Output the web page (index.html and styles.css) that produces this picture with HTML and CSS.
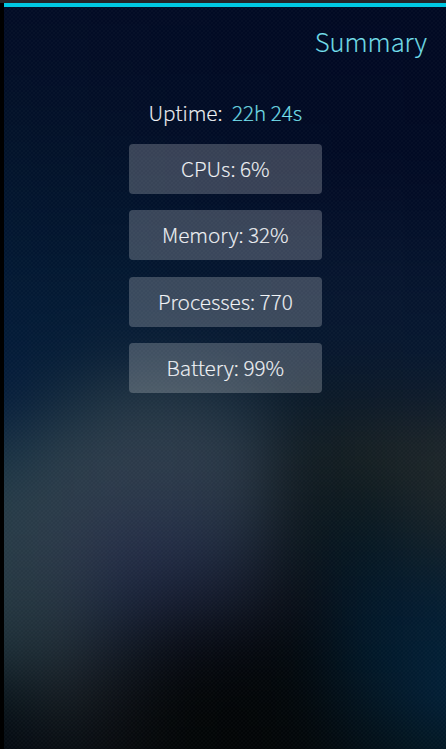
FILE: index.html
```html
<!DOCTYPE html>
<html lang="en">
<head>
<meta charset="utf-8">
<title>Summary</title>
<link rel="stylesheet" href="styles.css">
</head>
<body>
<main class="panel">
  <div class="backdrop" aria-hidden="true">
    <div class="glow">
      <i class="b0"></i><i class="b1"></i><i class="b2"></i><i class="b3"></i>
      <i class="b4"></i><i class="b5"></i><i class="b6"></i><i class="b7"></i>
      <i class="b8"></i><i class="b9"></i><i class="b10"></i><i class="b11"></i>
      <i class="b12"></i><i class="b13"></i><i class="b14"></i><i class="b15"></i>
    </div>
  </div>
  <h1 class="title">Summary</h1>
  <section class="content">
    <p class="uptime"><span>Uptime:</span><span class="value">22h 24s</span></p>
    <div class="stats">
      <div class="stat">CPUs: 6%</div>
      <div class="stat">Memory: 32%</div>
      <div class="stat">Processes: 770</div>
      <div class="stat">Battery: 99%</div>
    </div>
  </section>
</main>
</body>
</html>
```
FILE: styles.css
```css
* { box-sizing: border-box; margin: 0; }
html, body { height: 100%; overflow: hidden; }
body {
  background: #000;
  border-top: 3px solid #242427;
  padding-left: 4px;
  font-family: "Source Sans 3", "Noto Sans CJK SC", sans-serif;
  font-weight: 300;
  color: #f2f4f7;
  -webkit-text-stroke: 0.2px currentColor;
}
.panel {
  position: relative;
  height: 746px;
  border-top: 4px solid #00c8e2;
  overflow: hidden;
}

/* Soft wallpaper: horizontal colour bands blended into each other */
.backdrop { position: absolute; inset: 0; z-index: -1; overflow: hidden; }
.backdrop::after {
  content: "";
  position: absolute;
  inset: 0;
  background:
    radial-gradient(circle, rgba(255,255,255,.018) 0.7px, transparent 1.2px) 0 0 / 4px 4px,
    radial-gradient(circle, rgba(255,255,255,.018) 0.7px, transparent 1.2px) 2px 2px / 4px 4px;
}
.glow {
  position: absolute;
  left: -60px;
  right: -60px;
  top: -82px;
  display: flex;
  flex-direction: column;
  filter: blur(24px);
}
.glow i {
  height: 50px;
  background: linear-gradient(to right,
    var(--a) 60px, var(--b) 116px, var(--c) 176px, var(--d) 236px,
    var(--e) 296px, var(--f) 356px, var(--g) 416px, var(--h) 502px);
}
.b0 { --a:#020c25; --b:#020c25; --c:#020b25; --d:#020b25; --e:#010a24; --f:#010a24; --g:#010923; --h:#010923; }
.glow .b0 { height: 100px; }
.b1 { --a:#020d27; --b:#020d27; --c:#020c26; --d:#010b25; --e:#010a24; --f:#010a24; --g:#010924; --h:#010923; }
.b2 { --a:#021028; --b:#020f28; --c:#020e27; --d:#010c26; --e:#010b25; --f:#010a24; --g:#010a24; --h:#010923; }
.b3 { --a:#02132b; --b:#02122a; --c:#021029; --d:#020e28; --e:#010c26; --f:#010b25; --g:#010a24; --h:#010a24; }
.b4 { --a:#02152f; --b:#02142d; --c:#02132c; --d:#02112b; --e:#020f29; --f:#030e28; --g:#030d27; --h:#020c26; }
.b5 { --a:#021732; --b:#021630; --c:#03162f; --d:#04152e; --e:#04142e; --f:#05132d; --g:#05132d; --h:#04122c; }
.b6 { --a:#031a36; --b:#031a34; --c:#041a33; --d:#051831; --e:#051730; --f:#06162f; --g:#07162f; --h:#06152e; }
.b7 { --a:#031b38; --b:#041c37; --c:#0a2037; --d:#0a1f36; --e:#071a32; --f:#06172f; --g:#07172f; --h:#061730; }
.b8 { --a:#051d3c; --b:#12293c; --c:#213443; --d:#223442; --e:#182b3b; --f:#0a1a28; --g:#0c1a28; --h:#0f1c2b; }
.b9 { --a:#152f42; --b:#283b48; --c:#2d3c4b; --d:#2e3c4b; --e:#293846; --f:#111c23; --g:#172123; --h:#1f272b; }
.b10 { --a:#263c48; --b:#2c3c4a; --c:#2c394b; --d:#293649; --e:#273443; --f:#0f191f; --g:#0b191f; --h:#1d262a; }
.b11 { --a:#273b46; --b:#2c3949; --c:#262f48; --d:#222c45; --e:#1d283a; --f:#0b141b; --g:#031623; --h:#11212b; }
.b12 { --a:#243741; --b:#273542; --c:#1b263c; --d:#161d31; --e:#121929; --f:#090c14; --g:#021728; --h:#051e33; }
.b13 { --a:#1c2e37; --b:#212d36; --c:#111a26; --d:#080b14; --e:#05080f; --f:#02080c; --g:#011729; --h:#022036; }
.b14 { --a:#08141b; --b:#161e24; --c:#0c0f15; --d:#030607; --e:#020506; --f:#02070a; --g:#021420; --h:#02213a; }
.b15 { --a:#03080f; --b:#080d13; --c:#070a0d; --d:#020607; --e:#020506; --f:#020608; --g:#020d14; --h:#021824; }
.glow .b15 { height: 100px; }

.title {
  height: 92px;
  padding: 18px 19px 0 0;
  text-align: right;
  font-size: 28.4px;
  line-height: 36px;
  font-weight: 300;
  color: #78e2f0;
}
.content { width: 193.4px; margin-left: 124.6px; }
.uptime {
  display: flex;
  justify-content: center;
  gap: 9.5px;
  height: 45px;
  font-size: 23px;
  line-height: 30px;
  white-space: nowrap;
}
.value { color: #78e2f0; }
.stats { display: grid; gap: 16.4px; }
.stat {
  height: 50px;
  border-radius: 4px;
  background: rgba(255, 255, 255, .215);
  text-align: center;
  font-size: 23px;
  line-height: 51.6px;
  white-space: nowrap;
}
```
